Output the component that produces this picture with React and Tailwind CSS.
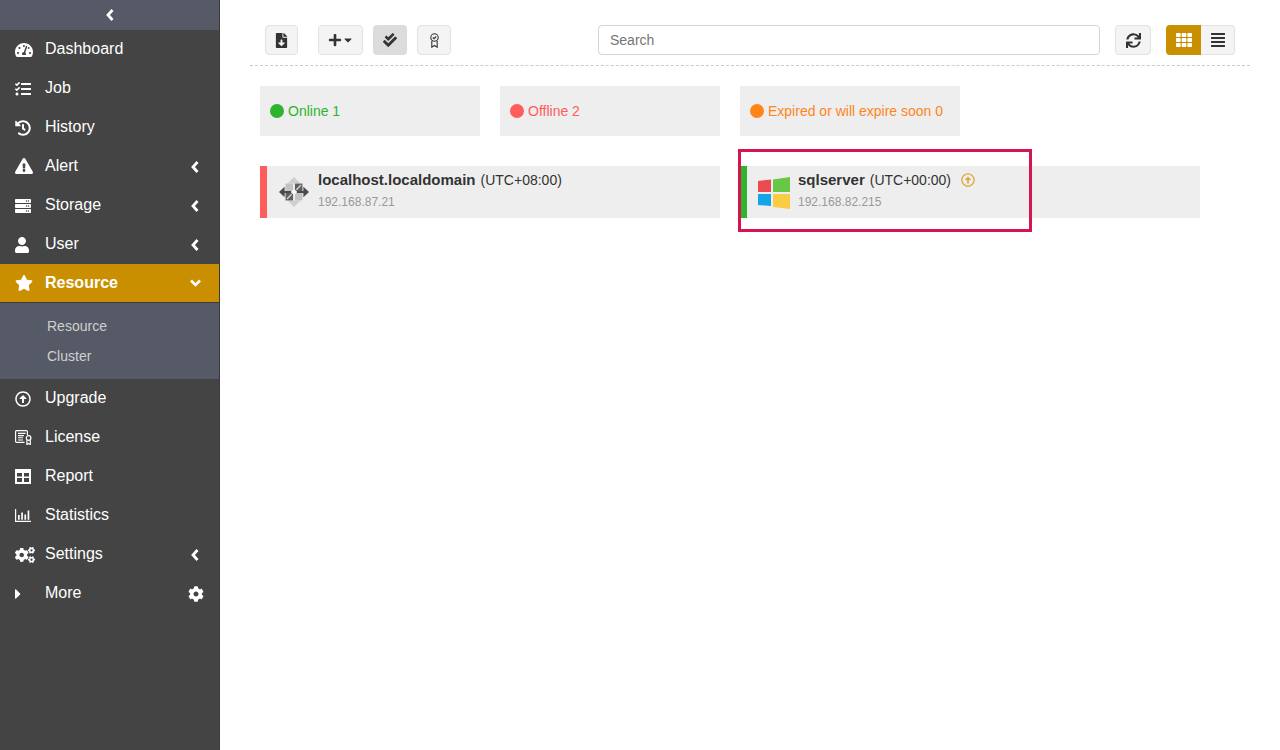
import React from "react";
import {
  FaTachometerAlt, FaTasks, FaHistory, FaExclamationTriangle, FaServer, FaUser, FaStar,
  FaRegArrowAltCircleUp, FaCogs, FaCaretRight, FaCog,
  FaFileDownload, FaPlus, FaCaretDown, FaCheckDouble, FaSync, FaTh, FaAlignJustify,
} from "react-icons/fa";

const LicenseIcon = () => (
  <svg width="17" height="15" viewBox="0 0 17 15" fill="none" stroke="currentColor" strokeWidth="1.2">
    <path d="M9.5 12.4H1.6a1 1 0 0 1-1-1V1.6a1 1 0 0 1 1-1h9.8a1 1 0 0 1 1 1V5" />
    <path d="M3 3.4h7.5M3 5.6h6M3 7.8h5M3 10h5" strokeWidth="1.1" />
    <circle cx="13.6" cy="8" r="2.3" />
    <path d="M11.9 10.2v4.3l1.7-1 1.7 1v-4.3" />
  </svg>
);

const TableIcon = () => (
  <svg width="16" height="15" viewBox="0 0 16 15" fill="currentColor">
    <path fillRule="evenodd" d="M0 0h16v15H0zM2 4v3.5h5V4zm7 0v3.5h5V4zM2 9v4h5V9zm7 0v4h5V9z" />
  </svg>
);

const StatsIcon = () => (
  <svg width="16" height="13" viewBox="0 0 16 13" fill="currentColor">
    <path d="M0 0h1.2v11.8H16V13H0z" />
    <path d="M3 6h1.7v4.8H3zM6.2 3.5h1.7v7.3H6.2zM9.4 5.500h1.7v5.3H9.4zM12.600 1.500h1.7v9.3h-1.700z" />
  </svg>
);

const AwardIcon = () => (
  <svg width="9" height="15" viewBox="0 0 9 15" fill="none" stroke="#333" strokeWidth="1.1">
    <circle cx="4.500" cy="4.500" r="3.700" />
    <path d="M2.800 4.500l1.300 1.200 2.100-2.200" />
    <path d="M1.800 8v6.200l2.700-1.700 2.700 1.700V8" />
  </svg>
);

const CentosIcon = () => (
  <svg width="30" height="30" viewBox="0 0 32 32">
    <polygon points="16,0 23,7 9,7" fill="#cfcfcf" />
    <polygon points="16,32 23,25 9,25" fill="#cfcfcf" />
    <path d="M7 7h8v8H7z" fill="#c2c2c2" />
    <path d="M17 7h8v8h-8z" fill="#5f5f5f" />
    <path d="M7 17h8v8H7z" fill="#5f5f5f" />
    <path d="M17 17h8v8h-8z" fill="#c2c2c2" />
    <path d="M18.500 13.500L23.500 8.500M13.500 18.500L8.500 23.500" stroke="#cfcfcf" strokeWidth="1.500" />
    <polygon points="0,16 6,10.500 6,21.500" fill="#4a4a4a" />
    <polygon points="32,16 26,10.500 26,21.500" fill="#4a4a4a" />
    <path d="M5 15h8v2H5zM19 15h8v2h-8z" fill="#4a4a4a" />
    <circle cx="16" cy="16" r="2.500" fill="#f6f6f6" />
  </svg>
);

const WindowsIcon = () => (
  <svg width="32" height="32" viewBox="0 0 32 32">
    <polygon points="0,4 13,2.500 13,15 0,15" fill="#ea4b4f" />
    <polygon points="15,2.500 32,0 32,15 15,15" fill="#68c744" />
    <polygon points="0,17 13,17 13,29 0,28" fill="#12a5ea" />
    <polygon points="15,17 32,17 32,32 15,30" fill="#f9cc45" />
  </svg>
);

const ChevLeft = ({ className = "" }) => (
  <svg width="8" height="12" viewBox="0 0 8 12" fill="none" stroke="currentColor" strokeWidth="2.800" className={className}>
    <path d="M6.500 1L2 6l4.500 5" />
  </svg>
);

const ChevDown = () => (
  <svg width="11" height="8" viewBox="0 0 11 8" fill="none" stroke="currentColor" strokeWidth="2.600">
    <path d="M1 1.500L5.500 6 10 1.500" />
  </svg>
);

const Row = ({ icon, label, right, active }) => (
  <div
    className={
      "flex items-center pl-[15px] pr-[15px] text-white " +
      (active ? "h-[38px] bg-[#c98f00] font-bold" : "h-[39px]")
    }
  >
    <span className="w-[30px] flex items-center shrink-0">{icon}</span>
    <span className={"flex-1 text-[16px] leading-[22px] " + (active ? "pb-[1px]" : "pb-[2px]")}>{label}</span>
    <span className="flex items-center justify-center w-[18px]">{right}</span>
  </div>
);

const Chev = () => <ChevLeft className="mt-[1px]" />;

const Btn = ({ className = "", children }) => (
  <div
    className={
      "h-[30px] flex items-center justify-center rounded-[4px] border border-[#e2e2e2] bg-[#f4f4f4] text-[#333] " +
      className
    }
  >
    {children}
  </div>
);

const Status = ({ color, text, label }) => (
  <div className="w-[220px] h-[50px] bg-[#eeeeee] flex items-center pl-[10px] gap-[4px]">
    <span className={"w-[14px] h-[14px] rounded-full " + color} />
    <span className={"text-[14px] " + text}>{label}</span>
  </div>
);

const Host = ({ bar, icon, name, tz, ip, extra, iconClass }) => (
  <div className="w-[460px] h-[52px] bg-[#eeeeee] flex">
    <div className={"h-full " + bar} />
    <div className={"flex items-center justify-center shrink-0 " + iconClass}>{icon}</div>
    <div className="flex flex-col">
      <div className="flex items-center h-[28px] text-[14px] text-[#333]">
        <span className="font-bold text-[15px]">{name}</span>
        <span className="ml-[5px]">{tz}</span>
        {extra}
      </div>
      <div className="text-[12px] text-[#999] leading-[16px]">{ip}</div>
    </div>
  </div>
);

export default function App() {
  return (
    <div className="flex h-[750px] w-[1280px] bg-white overflow-hidden font-['Liberation_Sans',sans-serif] relative">
      <aside className="w-[220px] shrink-0 h-full bg-[#444444] border-r border-[#3a3a3a]">
        <div className="h-[30px] bg-[#555a66] flex items-center justify-center text-white">
          <ChevLeft />
        </div>
        <Row icon={<FaTachometerAlt size={18} />} label="Dashboard" />
        <Row icon={<FaTasks size={16} />} label="Job" />
        <Row icon={<FaHistory size={16} />} label="History" />
        <Row icon={<FaExclamationTriangle size={18} className="mt-[-1px]" />} label="Alert" right={<Chev />} />
        <Row icon={<FaServer size={16} />} label="Storage" right={<Chev />} />
        <Row icon={<FaUser size={16} className="ml-[-1px]" />} label="User" right={<Chev />} />
        <Row icon={<FaStar size={18} />} label="Resource" right={<ChevDown />} active />
        <div className="h-[77px] bg-[#555a66] border-t border-[#3a3a3a] pt-[8px] pl-[47px] text-[14px] text-[#d0d0d0]">
          <div className="h-[30px] flex items-center">Resource</div>
          <div className="h-[30px] flex items-center">Cluster</div>
        </div>
        <Row icon={<FaRegArrowAltCircleUp size={16} />} label="Upgrade" />
        <Row icon={<LicenseIcon />} label="License" />
        <Row icon={<TableIcon />} label="Report" />
        <Row icon={<StatsIcon />} label="Statistics" />
        <Row icon={<FaCogs size={20} />} label="Settings" right={<Chev />} />
        <Row
          icon={<FaCaretRight size={16} className="ml-[-5px]" />}
          label="More"
          right={<FaCog size={16} className="ml-[1px]" />}
        />
      </aside>

      <main className="flex-1 px-[30px]">
        <div className="h-[66px] border-b border-dashed border-[#cccccc] flex items-start pt-[25px]">
          <Btn className="w-[33px] ml-[15px]"><FaFileDownload size={15} /></Btn>
          <Btn className="w-[45px] ml-[20px] pl-[1px]"><FaPlus size={14} /><FaCaretDown size={12} /></Btn>
          <div className="h-[30px] w-[34px] ml-[10px] flex items-center justify-center rounded-[4px] bg-[#dcdcdc] text-[#333]"><FaCheckDouble size={14} /></div>
          <Btn className="w-[34px] ml-[10px]"><AwardIcon /></Btn>
          <input
            className="ml-[147px] w-[502px] h-[30px] rounded-[4px] border border-[#d5d5d5] px-[11px] text-[14px] text-[#333] placeholder:text-[#757575] bg-white outline-none"
            placeholder="Search"
            readOnly
          />
          <Btn className="w-[36px] ml-[15px]"><FaSync size={15} /></Btn>
          <div className="ml-[15px] flex">
            <div className="w-[35px] h-[30px] bg-[#c98f00] text-white rounded-l-[4px] flex items-center justify-center"><FaTh size={16} /></div>
            <div className="w-[34px] h-[30px] bg-[#f4f4f4] border border-l-0 border-[#e2e2e2] rounded-r-[4px] flex items-center justify-center text-[#333]"><FaAlignJustify size={16} /></div>
          </div>
        </div>

        <div className="flex gap-[20px] ml-[10px] mt-[20px]">
          <Status color="bg-[#2db52d]" text="text-[#2db52d]" label="Online 1" />
          <Status color="bg-[#ff5c5c]" text="text-[#ff5c5c]" label="Offline 2" />
          <Status color="bg-[#ff851b]" text="text-[#ff851b]" label="Expired or will expire soon 0" />
        </div>

        <div className="flex gap-[20px] ml-[10px] mt-[30px]">
          <Host bar="w-[7px] bg-[#ff5c5c]" iconClass="w-[51px] pl-[3px]" icon={<CentosIcon />} name="localhost.localdomain" tz="(UTC+08:00)" ip="192.168.87.21" />
          <Host
            bar="w-[6px] ml-[1px] bg-[#2db52d]"
            iconClass="w-[51px] pl-[3px] pt-[1px]"
            icon={<WindowsIcon />}
            name="sqlserver"
            tz="(UTC+00:00)"
            ip="192.168.82.215"
            extra={<FaRegArrowAltCircleUp size={14} className="ml-[10px] text-[#e0a83c]" />}
          />
        </div>
      </main>

      <div className="absolute left-[738px] top-[149px] w-[294px] h-[83px] border-[3px] border-[#d81450] pointer-events-none" />
    </div>
  );
}
